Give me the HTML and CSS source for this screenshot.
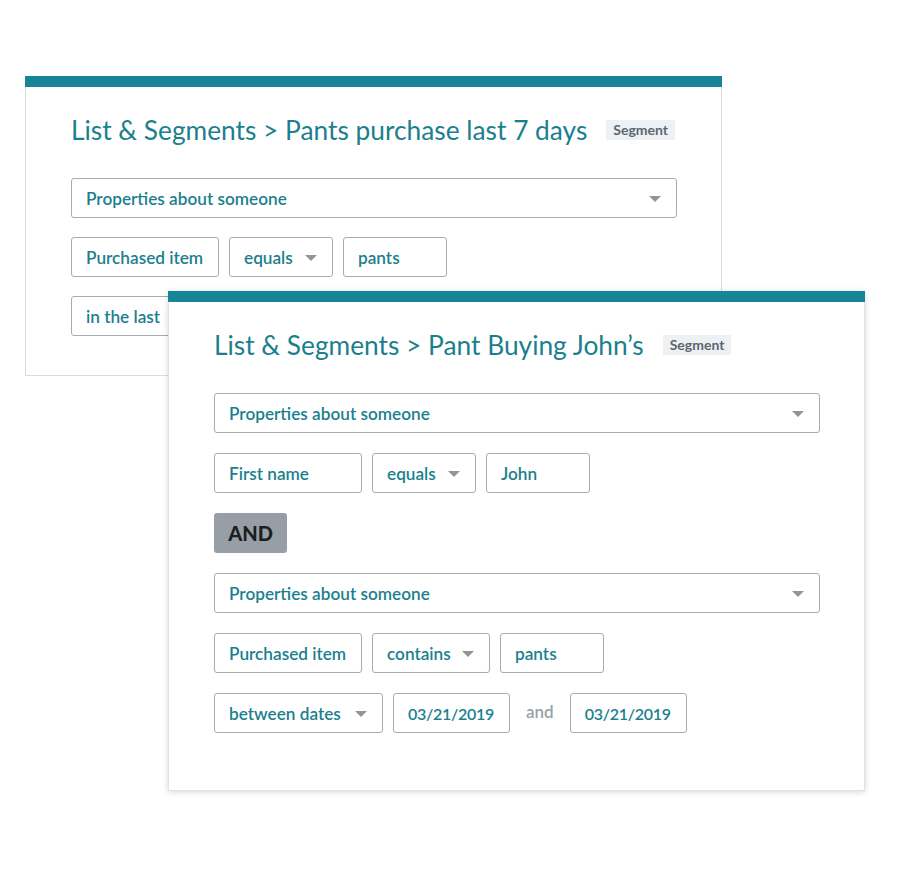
FILE: index.html
```html
<!DOCTYPE html>
<html lang="en">
<head>
<meta charset="utf-8">
<title>List &amp; Segments</title>
<link rel="stylesheet" href="styles.css">
</head>
<body>
<div class="stage">
  <section class="card card--back">
    <div class="card-bar"></div>
    <div class="card-body">
      <h1 class="title"><span class="title-text">List &amp; Segments &gt; Pants purchase last 7 days</span><span class="badge">Segment</span></h1>
      <div class="rows rows--tight">
        <div class="field field--select field--full"><span>Properties about someone</span><span class="caret"></span></div>
        <div class="row">
          <div class="field w-148"><span>Purchased item</span></div>
          <div class="field field--select w-104"><span>equals</span><span class="caret"></span></div>
          <div class="field w-104"><span>pants</span></div>
        </div>
        <div class="row">
          <div class="field w-148"><span>in the last</span></div>
        </div>
      </div>
    </div>
  </section>

  <section class="card card--front">
    <div class="card-bar"></div>
    <div class="card-body">
      <h1 class="title"><span class="title-text">List &amp; Segments &gt; Pant Buying John’s</span><span class="badge">Segment</span></h1>
      <div class="rows">
        <div class="field field--select field--full"><span>Properties about someone</span><span class="caret"></span></div>
        <div class="row">
          <div class="field w-148"><span>First name</span></div>
          <div class="field field--select w-104"><span>equals</span><span class="caret"></span></div>
          <div class="field w-104"><span>John</span></div>
        </div>
        <div class="row">
          <div class="and-btn">AND</div>
        </div>
        <div class="field field--select field--full"><span>Properties about someone</span><span class="caret"></span></div>
        <div class="row">
          <div class="field w-148"><span>Purchased item</span></div>
          <div class="field field--select w-118"><span>contains</span><span class="caret"></span></div>
          <div class="field w-104"><span>pants</span></div>
        </div>
        <div class="row">
          <div class="field field--select w-169"><span>between dates</span><span class="caret"></span></div>
          <div class="field field--date w-117"><span>03/21/2019</span></div>
          <span class="sep">and</span>
          <div class="field field--date w-117"><span>03/21/2019</span></div>
        </div>
      </div>
    </div>
  </section>
</div>
</body>
</html>
```
FILE: styles.css
```css
* { box-sizing: border-box; }

html, body {
  margin: 0;
  padding: 0;
  background: #ffffff;
}

body {
  font-family: "Lato", "Open Sans", sans-serif;
  color: #1b7f8e;
}

.stage {
  position: relative;
  width: 898px;
  height: 878px;
}

.card {
  position: absolute;
  width: 697px;
  background: #ffffff;
  border: 1px solid #dcdcdc;
  border-top: none;
}

.card--back {
  left: 25px;
  top: 76px;
  height: 300px;
}

.card--front {
  left: 168px;
  top: 291px;
  height: 500px;
  border-color: #e2e2e2;
  box-shadow: 0 1px 6px rgba(0, 0, 0, 0.16);
}

.card-bar {
  height: 11px;
  margin: 0 -1px;
  background: #168597;
}

.card-body {
  padding: 27px 0 0 45px;
}

.title {
  display: flex;
  align-items: baseline;
  gap: 19px;
  margin: 0 0 32px;
  font-size: 26.3px;
  line-height: 32px;
  font-weight: 400;
  color: #1b7f8e;
}

.badge {
  display: inline-block;
  padding: 0 7px;
  height: 20px;
  line-height: 20px;
  font-size: 14px;
  font-weight: 700;
  color: #5d666e;
  background: #eef1f4;
  transform: translateY(-5px);
}

.rows {
  display: flex;
  flex-direction: column;
  gap: 20px;
  width: 606px;
}

.rows--tight {
  gap: 19px;
}

.row {
  display: flex;
  align-items: center;
  gap: 10px;
}

.field {
  display: flex;
  align-items: center;
  justify-content: space-between;
  height: 40px;
  padding: 0 15px 0 14px;
  border: 1px solid #a6acb1;
  border-radius: 3px;
  font-size: 17.2px;
  font-weight: 600;
  color: #1b7f8e;
  white-space: nowrap;
  background: #ffffff;
}

.field--date {
  font-size: 16px;
  letter-spacing: -0.3px;
}

.field--full { width: 606px; }
.w-148 { width: 148px; }
.w-104 { width: 104px; }
.w-118 { width: 118px; }
.w-169 { width: 169px; }
.w-117 { width: 117px; }

.caret {
  width: 0;
  height: 0;
  border-left: 6px solid transparent;
  border-right: 6px solid transparent;
  border-top: 6px solid #8e959b;
  margin-top: 1px;
}

.and-btn {
  width: 73px;
  height: 40px;
  display: flex;
  align-items: center;
  justify-content: center;
  background: #979ea5;
  border-radius: 3px;
  font-size: 20px;
  font-weight: 900;
  color: #1c1f22;
}

.sep {
  padding: 0 6px;
  font-size: 17px;
  font-weight: 600;
  color: #9aa0a6;
  margin-top: -4px;
}
```
